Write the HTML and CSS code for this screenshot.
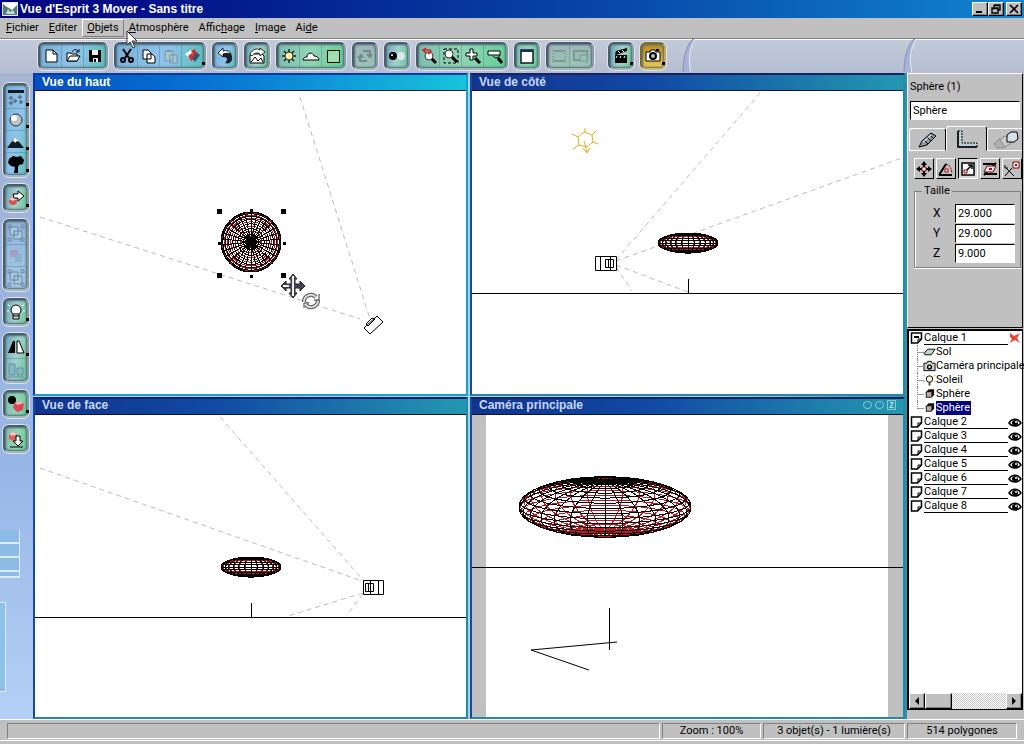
FILE: index.html
```html
<!DOCTYPE html>
<html lang="fr">
<head>
    <meta charset="UTF-8">
    <meta name="viewport" content="width=device-width, initial-scale=1.0">
    <title>Vue d'Esprit 3 Mover - Sans titre</title>
    <link rel="stylesheet" href="styles.css">
</head>
<body>

<!-- icon set, 18x18 grid -->
<svg class="icon-defs" width="0" height="0" aria-hidden="true">
    <symbol id="i-new" viewBox="0 0 18 18"><path d="M4 3h7l4 4v8H4z" fill="#fff" stroke="#000"/><path d="M11 3v4h4" fill="none" stroke="#000"/></symbol>
    <symbol id="i-open" viewBox="0 0 18 18"><path d="M3 14V6h4l1 1h5v7z" fill="#fff" stroke="#000"/><path d="M3 14l3-5h10l-3 5z" fill="#fff" stroke="#000"/><path d="M8 5c2-3 4-3 6-1M15 2v3h-3" fill="none" stroke="#000"/></symbol>
    <symbol id="i-save" viewBox="0 0 18 18"><path d="M3 3h12v12H4l-1-1z" fill="#000"/><path d="M6 3h6v5H6zM7 11h5v4H7z" fill="#eee"/><path d="M8 12h2v3H8z" fill="#000"/></symbol>
    <symbol id="i-cut" viewBox="0 0 18 18"><path d="M5 2l6 9M13 2l-6 9" stroke="#000" stroke-width="2"/><circle cx="5" cy="13" r="2" fill="none" stroke="#000" stroke-width="2"/><circle cx="13" cy="13" r="2" fill="none" stroke="#000" stroke-width="2"/></symbol>
    <symbol id="i-copy" viewBox="0 0 18 18"><path d="M3 3h5l3 3v6H3zM7 7h5l3 3v6H7z" fill="#fff" stroke="#000"/></symbol>
    <symbol id="i-paste" viewBox="0 0 18 18"><path d="M3 4h8v10H3zM8 8h7v8H8z" fill="#a6c8d0" stroke="#7595a8"/><path d="M5 3h4v2H5z" fill="#7595a8"/></symbol>
    <symbol id="i-paint" viewBox="0 0 18 18"><path d="M1 7l6-4 3 4-5 4z" fill="#fff"/><path d="M4 9l4-3 3 5-4 3z" fill="#d83030"/><path d="M7 4l4-2 2 5-3 2z" fill="#d83030"/><path d="M12 5l4 3-5 7-3-4z" fill="#405068"/></symbol>
    <symbol id="i-undo" viewBox="0 0 18 18"><path d="M7 5c6-2 10 1 9 8-1 3-4 4-7 3 3-3 3-6-2-6z" fill="#182028"/><path d="M2 6l5-5v3c4-1 7 0 8 3-3-1-5-1-8 0v3z" fill="#fff" stroke="#000" stroke-width=".8"/></symbol>
    <symbol id="i-edit" viewBox="0 0 18 18"><path d="M2 16V8l3-1h9l2 2v7z" fill="#fff" stroke="#000"/><path d="M3 15l4-5 3 4 3-3 2 4" fill="none" stroke="#000"/><path d="M2 7c3-5 7-6 10-4V1l5 4-5 4V7C9 5 6 6 4 9z" fill="#fff" stroke="#000" stroke-width=".8"/></symbol>
    <symbol id="i-sun" viewBox="0 0 18 18"><path d="M9 2v14M2 9h14M4 4l10 10M14 4L4 14" stroke="#222" stroke-width="1.5"/><circle cx="9" cy="9" r="4" fill="#fff3a0" stroke="#333"/></symbol>
    <symbol id="i-cloud" viewBox="0 0 18 18"><path d="M1 13c0-2 2-3 4-3 0-5 6-5 7-1 3 0 5 2 5 4z" fill="#fff" stroke="#000"/></symbol>
    <symbol id="i-box" viewBox="0 0 18 18"><path d="M3.500 3.500h12v12h-12z" fill="#a2dbac" stroke="#000"/></symbol>
    <symbol id="i-swap" viewBox="0 0 18 18"><path d="M7 4h7v5M11 7l3 3 2-3M11 14H4V9M2 11l3-3 2 3" fill="none" stroke="#718a90" stroke-width="2"/></symbol>
    <symbol id="i-balls" viewBox="0 0 18 18"><circle cx="5" cy="9" r="4" fill="#000"/><circle cx="13" cy="9" r="4" fill="#dfe8e8"/><circle cx="4" cy="8" r="1" fill="#fff"/></symbol>
    <symbol id="i-zoomr" viewBox="0 0 18 18"><circle cx="9" cy="9" r="4" fill="#fff" stroke="#333"/><path d="M12 12l4 4" stroke="#000" stroke-width="3"/><path d="M3 3h6c3 0 2 3-1 4M6 1L3 3l3 3" stroke="#d82020" stroke-width="1.500" fill="none"/></symbol>
    <symbol id="i-zooma" viewBox="0 0 18 18"><path d="M2 2h14v14H2z" fill="none" stroke="#000" stroke-dasharray="3 2"/><circle cx="7" cy="7" r="4" fill="#fff" stroke="#333"/><path d="M10 10l5 5" stroke="#000" stroke-width="3"/></symbol>
    <symbol id="i-zoomin" viewBox="0 0 18 18"><path d="M6 2h3v4h4v3H9v4H6V9H2V6h4z" fill="#fff" stroke="#000"/><path d="M11 11l5 5" stroke="#000" stroke-width="3"/></symbol>
    <symbol id="i-zoomout" viewBox="0 0 18 18"><path d="M2 4h12v4H2z" fill="#fff" stroke="#000"/><path d="M7 9c2 3 6 2 7-1" fill="none" stroke="#000"/><path d="M12 11l4 5" stroke="#000" stroke-width="3"/></symbol>
    <symbol id="i-win" viewBox="0 0 18 18"><path d="M3 3h12v13H3z" fill="#fff" stroke="#101828" stroke-width="1.500"/><path d="M3 3h12v2H3z" fill="#202c68"/></symbol>
    <symbol id="i-render" viewBox="0 0 18 18"><path d="M3 4h12v10H3z" fill="none" stroke="#769b90" stroke-width="2"/><path d="M3 4v10M15 4v10" stroke="#9fbab0" stroke-width="2" stroke-dasharray="2 1"/></symbol>
    <symbol id="i-render2" viewBox="0 0 18 18"><path d="M2 4h13v9H2z" fill="none" stroke="#769b90" stroke-width="2"/><path d="M8 8h7v8l-2-2H8z" fill="#a2bdb5" stroke="#769b90"/></symbol>
    <symbol id="i-clap" viewBox="0 0 18 18"><path d="M3 8h12v8H3zM3 7l1-3 11-3v3L4 8z" fill="#000"/><path d="M6 4l2 2M10 3l2 2M5 9l-1 2M9 9l-1 2M13 9l-1 2" stroke="#fff"/></symbol>
    <symbol id="i-cam" viewBox="0 0 18 18"><path d="M2 5h4l1-2h4l1 2h4v9H2z" fill="#fff" stroke="#000"/><circle cx="9" cy="9" r="3" fill="#bbb" stroke="#000" stroke-width="2"/><path d="M12 2h3v2h-3z" fill="#000"/></symbol>
    <symbol id="i-plane" viewBox="0 0 18 18"><path d="M1 2h16v3H1z" fill="#101820"/><path d="M3 9h2v2H3zM7 12h2v2H7zM12 8h2v2h-2zM3 14h2v2H3zM13 13h2v2h-2z" fill="#fff" stroke="#223" stroke-width=".8"/></symbol>
    <symbol id="i-sphere" viewBox="0 0 18 18"><circle cx="9" cy="9" r="6" fill="#bcc3c8" stroke="#283038"/><circle cx="7" cy="7" r="3" fill="#fff"/></symbol>
    <symbol id="i-mount" viewBox="0 0 18 18"><path d="M0 15l8-11 9 11z" fill="#101820"/><path d="M5 9l3-5 4 5-2-1-2 2-1-2z" fill="#fff"/></symbol>
    <symbol id="i-tree" viewBox="0 0 18 18"><path d="M7 18l1-6-4-1-3-3 1-4 4-3 4 1 4-1 3 4-1 4-4 1-1 2v6z" fill="#000"/></symbol>
    <symbol id="i-load" viewBox="0 0 18 18"><circle cx="6" cy="12" r="4" fill="#e05050"/><path d="M2 10l4-2 4 2-4 2z" fill="#f3d4d4"/><path d="M6 5h5V2l6 5-6 5V9H7z" fill="#fff" stroke="#000"/></symbol>
    <symbol id="i-group" viewBox="0 0 18 18"><path d="M3 3h8v8H3zM7 7h8v8H7z" fill="#a9c6de" stroke="#6a88a8"/><path d="M1 1h3v3H1zM14 1h3v3h-3zM1 14h3v3H1zM14 14h3v3h-3z" fill="none" stroke="#6a88a8"/></symbol>
    <symbol id="i-bool" viewBox="0 0 18 18"><path d="M3 3h8v7H3z" fill="#a99cc4"/><path d="M8 7h7v8H8z" fill="#8fafce"/></symbol>
    <symbol id="i-bulb" viewBox="0 0 18 18"><circle cx="9" cy="7" r="5" fill="#fff" stroke="#000"/><path d="M6 11h6v5H6z" fill="#ddd" stroke="#000"/><path d="M6 13h6" stroke="#000"/><path d="M1 2l2 1M17 2l-2 1M0 8h2M16 8h2" stroke="#fff"/></symbol>
    <symbol id="i-flip" viewBox="0 0 18 18"><path d="M1 15L6 3h2v12z" fill="#000"/><path d="M10 15V3h2l5 12z" fill="#fff" stroke="#000"/></symbol>
    <symbol id="i-align" viewBox="0 0 18 18"><path d="M2 3h6v11H2zM10 7h6v7h-6z" fill="#86b8c4" stroke="#5f8fa0"/><path d="M1 16h16" stroke="#5f8fa0"/></symbol>
    <symbol id="i-pos" viewBox="0 0 18 18"><path d="M7 8l6-2 4 2-1 7-6 2-4-4z" fill="#dc4854"/><path d="M7 8l6-2 4 2-6 2z" fill="#ffb6b6"/><circle cx="5" cy="5" r="4" fill="#000"/></symbol>
    <symbol id="i-drop" viewBox="0 0 18 18"><path d="M2 4l4-2 4 2v5l-4 2-4-2z" fill="#e06060"/><path d="M2 4l4-2 4 2-4 2z" fill="#f8cccc"/><path d="M9 6h4v5h3l-5 5-5-5h3z" fill="#fff" stroke="#000"/><path d="M3 17h13" stroke="#000"/></symbol>
    <symbol id="i-move" viewBox="0 0 18 18"><path d="M9 1l3 4H6zM9 17l3-4H6zM1 9l4-3v6zM17 9l-4-3v6z" fill="#000"/><path d="M9 4v10M4 9h10" stroke="#000" stroke-width="2"/><path d="M7 7h4v4H7z" fill="#fff" stroke="#800"/></symbol>
    <symbol id="i-rot" viewBox="0 0 18 18"><path d="M2 15L9 4M2 15h13" stroke="#000" stroke-width="2"/><path d="M9 4c4 1 5 4 6 9" fill="none" stroke="#800" stroke-dasharray="2 1"/><path d="M8 9h3v3H8z" fill="#fff" stroke="#a00"/></symbol>
    <symbol id="i-size" viewBox="0 0 18 18"><path d="M3 3h12v12H3z" fill="#fff" stroke="#000" stroke-width="1.500"/><path d="M5 10h3v3H5z" fill="#fff" stroke="#a00"/><path d="M8 10l5-5M9 5h4v4" fill="none" stroke="#000" stroke-width="1.500"/></symbol>
    <symbol id="i-twist" viewBox="0 0 18 18"><path d="M2 4h12M4 14h12M15 3l-3 3M3 15l3-3" stroke="#000" stroke-width="2"/><path d="M3 12l3-6h9l-3 6z" fill="#eee" stroke="#700"/><path d="M8 8h3v2H8z" fill="#c00"/></symbol>
    <symbol id="i-axis" viewBox="0 0 18 18"><path d="M10 2h6v6h-6z" fill="#fff" stroke="#800"/><path d="M3 8l8 8M9 8l-7 8M2 5v3h3" fill="none" stroke="#000"/><path d="M12 4h2v2h-2z" fill="#a00"/></symbol>
    <symbol id="i-page" viewBox="0 0 14 14"><path d="M1.500 2h10v6l-4 4h-6z" fill="#fff" stroke="#000" stroke-width="1.500"/><path d="M11 8H8v4" fill="none" stroke="#000"/></symbol>
    <symbol id="i-pageopen" viewBox="0 0 14 14"><path d="M1.500 2h10v6l-4 4h-6z" fill="#fff" stroke="#000" stroke-width="1.500"/><path d="M4 6h5" stroke="#000" stroke-width="2"/><path d="M11 8H8v4" fill="none" stroke="#000"/></symbol>
    <symbol id="i-eye" viewBox="0 0 14 14"><path d="M1 8c3-5 9-5 12 0-3 4-9 4-12 0z" fill="#fff" stroke="#000" stroke-width="1.5"/><circle cx="7" cy="8" r="3" fill="#000"/><circle cx="8" cy="7" r="1" fill="#fff"/></symbol>
    <symbol id="i-x" viewBox="0 0 14 14"><path d="M2 2l4 3 6-3-3 5 3 5-5-3-6 3 3-4-2-2z" fill="#ee4438"/></symbol>
    <symbol id="i-ground" viewBox="0 0 14 14"><path d="M1 9l4-5h8l-4 6H2z" fill="#b8d8d4" stroke="#000"/></symbol>
    <symbol id="i-smallcam" viewBox="0 0 14 14"><path d="M1 4h3l1-2h4l1 2h3v8H1z" fill="#ccc" stroke="#000"/><circle cx="7" cy="8" r="2" fill="#fff" stroke="#000" stroke-width="1.5"/></symbol>
    <symbol id="i-smallbulb" viewBox="0 0 14 14"><circle cx="7" cy="6" r="3.5" fill="#fff6d0" stroke="#000"/><path d="M6 9h2v4H6z" fill="#444"/><path d="M1 2l1 1M13 2l-1 1M1 9l1-1M13 9l-1-1" stroke="#777"/></symbol>
    <symbol id="i-cube" viewBox="0 0 14 14"><path d="M3 5l3-3h6v6l-3 3H3z" fill="#181010"/><path d="M4 5h5v5H4z" fill="#b8aca0"/></symbol>
    <symbol id="i-arrowl" viewBox="0 0 8 8"><path d="M6 0v8L2 4z"/></symbol>
    <symbol id="i-arrowr" viewBox="0 0 8 8"><path d="M2 0v8l4-4z"/></symbol>
</svg>

<div class="app">
    <header class="titlebar">
        <svg class="logo" viewBox="0 0 16 14"><path d="M0 0h16v14H0z" fill="#dfe9ec"/><path d="M1 1h14v5L9 9 1 3z" fill="#fff"/><path d="M1 2l4 3 2 1 3 2 5-5v10H1z" fill="#50807c"/><path d="M6 7l2 3 3-2 2 4H4z" fill="#c4dcd8"/></svg>
        <h1>Vue d'Esprit 3 Mover - Sans titre</h1>
        <div class="win-buttons">
            <button aria-label="Réduire"><svg viewBox="0 0 12 10"><path d="M2 8h6" stroke="#000" stroke-width="2"/></svg></button>
            <button aria-label="Restaurer"><svg viewBox="0 0 12 10"><path d="M4 1h6v5H8M4 1v2M4 1.5h6" fill="none" stroke="#000" stroke-width="1.4"/><path d="M2 4h6v5H2zM2 4.5h6" fill="none" stroke="#000" stroke-width="1.4"/></svg></button>
            <button class="close" aria-label="Fermer"><svg viewBox="0 0 12 10"><path d="M2 1l8 8M10 1L2 9" stroke="#000" stroke-width="1.7"/></svg></button>
        </div>
    </header>

    <nav class="menubar">
        <button><u>F</u>ichier</button>
        <button><u>E</u>diter</button>
        <button class="hover"><u>O</u>bjets</button>
        <button><u>A</u>tmosphère</button>
        <button>Affic<u>h</u>age</button>
        <button><u>I</u>mage</button>
        <button>Ai<u>d</u>e</button>
        <svg class="pointer" viewBox="0 0 12 19"><path d="M1 1v14l3-3 3 6 2-1-3-6h5z" fill="#fff" stroke="#333"/></svg>
    </nav>

    <div class="toolbar">
        <div class="group blue">
            <button aria-label="Nouveau"><svg><use href="#i-new"/></svg></button>
            <button aria-label="Ouvrir"><svg><use href="#i-open"/></svg></button>
            <button aria-label="Enregistrer"><svg><use href="#i-save"/></svg></button>
        </div>
        <div class="group blue">
            <button aria-label="Couper"><svg><use href="#i-cut"/></svg></button>
            <button aria-label="Copier"><svg><use href="#i-copy"/></svg></button>
            <button aria-label="Coller"><svg><use href="#i-paste"/></svg></button>
            <button class="more" aria-label="Peindre"><svg><use href="#i-paint"/></svg></button>
        </div>
        <div class="group blue"><button aria-label="Annuler"><svg><use href="#i-undo"/></svg></button></div>
        <div class="group"><button aria-label="Modifier"><svg><use href="#i-edit"/></svg></button></div>
        <div class="group green">
            <button aria-label="Atmosphère"><svg><use href="#i-sun"/></svg></button>
            <button aria-label="Nuages"><svg><use href="#i-cloud"/></svg></button>
            <button aria-label="Fond"><svg><use href="#i-box"/></svg></button>
        </div>
        <div class="group off"><button aria-label="Échanger"><svg><use href="#i-swap"/></svg></button></div>
        <div class="group"><button aria-label="Aperçu"><svg><use href="#i-balls"/></svg></button></div>
        <div class="group green">
            <button aria-label="Annuler le zoom"><svg><use href="#i-zoomr"/></svg></button>
            <button aria-label="Zoom sur zone"><svg><use href="#i-zooma"/></svg></button>
            <button aria-label="Zoom avant"><svg><use href="#i-zoomin"/></svg></button>
            <button aria-label="Zoom arrière"><svg><use href="#i-zoomout"/></svg></button>
        </div>
        <div class="group green"><button aria-label="Vues"><svg><use href="#i-win"/></svg></button></div>
        <div class="group off">
            <button aria-label="Rendu"><svg><use href="#i-render"/></svg></button>
            <button aria-label="Rendu de zone"><svg><use href="#i-render2"/></svg></button>
        </div>
        <div class="group apart"><button class="more" aria-label="Animation"><svg><use href="#i-clap"/></svg></button></div>
        <div class="group gold"><button class="more" aria-label="Calculer l'image"><svg><use href="#i-cam"/></svg></button></div>
        <svg class="swoosh"><path d="M2 34C2 20 5 6 12 0h2C8 10 7 22 10 34z" fill="#a7b3d8"/><path d="M2 34C2 20 5 6 12 0" fill="none" stroke="#8390ae"/><path d="M14 0C8 10 7 22 10 34" fill="none" stroke="#e6ebf6"/></svg>
        <svg class="swoosh end"><path d="M2 34C2 20 5 6 12 0h2C8 10 7 22 10 34z" fill="#a7b3d8"/><path d="M2 34C2 20 5 6 12 0" fill="none" stroke="#8390ae"/><path d="M14 0C8 10 7 22 10 34" fill="none" stroke="#e6ebf6"/></svg>
    </div>

    <div class="main">
        <aside class="side">
            <div class="group blue">
                <button class="more" aria-label="Plan"><svg><use href="#i-plane"/></svg></button>
                <button class="more" aria-label="Sphère"><svg><use href="#i-sphere"/></svg></button>
                <button class="more" aria-label="Terrain"><svg><use href="#i-mount"/></svg></button>
                <button class="more" aria-label="Plante"><svg><use href="#i-tree"/></svg></button>
            </div>
            <div class="group"><button class="more" aria-label="Charger un objet"><svg><use href="#i-load"/></svg></button></div>
            <div class="group dim">
                <button aria-label="Grouper"><svg><use href="#i-group"/></svg></button>
                <button aria-label="Booléen"><svg><use href="#i-bool"/></svg></button>
                <button aria-label="Dégrouper"><svg><use href="#i-group"/></svg></button>
            </div>
            <div class="group"><button class="more" aria-label="Lumière"><svg><use href="#i-bulb"/></svg></button></div>
            <div class="group">
                <button class="more" aria-label="Symétrie"><svg><use href="#i-flip"/></svg></button>
                <button aria-label="Aligner"><svg><use href="#i-align"/></svg></button>
            </div>
            <div class="group green"><button class="more" aria-label="Dispersion"><svg><use href="#i-pos"/></svg></button></div>
            <div class="group green"><button aria-label="Poser"><svg><use href="#i-drop"/></svg></button></div>
            <div class="decor"><div class="slats"></div><div class="pane"></div></div>
        </aside>

        <main class="views">
            <section class="view active">
                <h2>Vue du haut</h2>
                <svg class="canvas">
                    <g class="frustum"><path d="M265 6L335 228"/><path d="M5 126L325 228"/></g>
                    <g class="wire" data-x="216" data-y="151" data-r="30" data-h="10" data-tilt="90" data-step="11"></g>
                    <path d="M182 118h5v5h-5zM246 118h5v5h-5zM182 182h5v5h-5zM246 182h5v5h-5zM215 118h3v3h-3zM183 151h3v3h-3zM248 151h3v3h-3zM215 184h3v3h-3z"/>
                    <g class="line"><path d="M329 237l13-12 6 6-13 12zM331 233l6-6 3 1-7 7z"/></g>
                    <path d="M258 183l4 5h-2v5h5v-3l5 5-5 5v-3h-5v5h2l-4 5-4-5h2v-5h-5v3l-5-5 5-5v3h5v-5h-2z" fill="#445" stroke="#222"/>
                    <path d="M258 185v20M248 195h6" stroke="#eee" stroke-width="2"/>
                    <g fill="none"><path d="M269 211a7 7 0 0 1 12-5M283 209a7 7 0 0 1-12 5" stroke="#555" stroke-width="4"/><path d="M269 211a7 7 0 0 1 12-5M283 209a7 7 0 0 1-12 5" stroke="#ddd" stroke-width="2"/><path d="M279 209h5v-6M274 212h-5v5" stroke="#333"/></g>
                </svg>
            </section>

            <section class="view">
                <h2>Vue de côté</h2>
                <svg class="canvas">
                    <g class="frustum"><path d="M144 169L288 2"/><path d="M144 170L430 67"/><path d="M144 176l16 24"/><path d="M144 174l72 27"/></g>
                    <g class="wire" data-x="216" data-y="152" data-r="30" data-h="10" data-tilt="0" data-step="15"></g>
                    <g class="sunmark"><path d="M106 46l6-5 8 3 1 7-6 5-8-2zM113 41v-4M120 44l5-5M121 51l5 2M107 54l-6 4M106 46l-6-3M112 50l3 11M111 57l4 5 3-5"/></g>
                    <g class="line"><path d="M123.500 165.500h21v14h-21zM128.500 165v14M133.500 168.500h8v8h-8zM136.500 168v9M138.500 165v14"/><line x1="0" y1="202.500" x2="100%" y2="202.500"/><path d="M216.500 188v14"/></g>
                </svg>
            </section>

            <section class="view">
                <h2>Vue de face</h2>
                <svg class="canvas">
                    <g class="frustum"><path d="M185 2l143 163"/><path d="M5 53l322 113"/><path d="M328 178l-75 23"/><path d="M328 179l-16 21"/></g>
                    <g class="wire" data-x="216" data-y="152" data-r="30" data-h="10" data-tilt="0" data-step="15"></g>
                    <g class="line"><path d="M328.500 165.500h20v14h-20zM343.500 165v14M330.500 168.500h8v8h-8zM333.500 168v9M335.500 165v14"/><line x1="0" y1="202.500" x2="100%" y2="202.500"/><path d="M216.500 188v14"/></g>
                </svg>
            </section>

            <section class="view camera">
                <h2>Caméra principale <span class="nav"><i></i><i></i><b>z</b></span></h2>
                <svg class="canvas">
                    <g class="wire" data-x="133" data-y="92" data-r="86" data-h="26" data-tilt="11" data-step="10"></g>
                    <g class="line"><line x1="0" y1="152.500" x2="100%" y2="152.500"/><path d="M137.500 193v42M145 227l-86 8 58 20"/></g>
                </svg>
            </section>
        </main>

        <aside class="panel">
            <form class="props">
                <label class="obj-name" for="name">Sphère (1)</label>
                <input id="name" type="text" value="Sphère">
                <div class="tabs">
                    <button type="button" aria-label="Matière"><svg viewBox="0 0 28 20"><path d="M5 17l3-6 9-8 5 3-9 9z" fill="#8d9aa4" stroke="#000"/><path d="M10 10l4 4M13 7l4 4M16 5l4 4" stroke="#000"/><path d="M9 12l8-7" stroke="#fff"/></svg></button>
                    <button type="button" class="on" aria-label="Dimensions"><svg viewBox="0 0 28 20"><path d="M5 2h4v12h15v4H5z" fill="#b9ccd2" stroke="#000" stroke-dasharray="2 1"/><path d="M5 2v16h19" fill="none" stroke="#000" stroke-width="1.5"/></svg></button>
                    <button type="button" aria-label="Animation"><svg viewBox="0 0 28 20"><path d="M2 14l5-5h6l4 4-5 5H5z" fill="#b0b0b0" stroke="#777" stroke-dasharray="2 1"/><path d="M8 10l5-4 5 2 1 5-6 4z" fill="#ccc" stroke="#888"/><path d="M15 5l4-3h6l1 7-4 3h-7z" fill="#d4e3ea" stroke="#000"/></svg></button>
                </div>
                <div class="modes">
                    <button type="button" aria-label="Position"><svg><use href="#i-move"/></svg></button>
                    <button type="button" aria-label="Orientation"><svg><use href="#i-rot"/></svg></button>
                    <button type="button" class="on" aria-label="Taille"><svg><use href="#i-size"/></svg></button>
                    <button type="button" aria-label="Torsion"><svg><use href="#i-twist"/></svg></button>
                    <button type="button" aria-label="Pivot"><svg><use href="#i-axis"/></svg></button>
                </div>
                <fieldset>
                    <legend>Taille</legend>
                    <label for="x">X</label><input id="x" type="text" value="29.000">
                    <label for="y">Y</label><input id="y" type="text" value="29.000">
                    <label for="z">Z</label><input id="z" type="text" value="9.000">
                </fieldset>
            </form>

            <div class="layers">
                <ul>
                    <li class="layer"><svg><use href="#i-pageopen"/></svg><span>Calque 1</span><svg><use href="#i-x"/></svg></li>
                    <li class="item"><svg><use href="#i-ground"/></svg><span>Sol</span></li>
                    <li class="item"><svg><use href="#i-smallcam"/></svg><span>Caméra principale</span></li>
                    <li class="item"><svg><use href="#i-smallbulb"/></svg><span>Soleil</span></li>
                    <li class="item"><svg><use href="#i-cube"/></svg><span>Sphère</span></li>
                    <li class="item last selected"><svg><use href="#i-cube"/></svg><span>Sphère</span></li>
                    <li class="layer"><svg><use href="#i-page"/></svg><span>Calque 2</span><svg><use href="#i-eye"/></svg></li>
                    <li class="layer"><svg><use href="#i-page"/></svg><span>Calque 3</span><svg><use href="#i-eye"/></svg></li>
                    <li class="layer"><svg><use href="#i-page"/></svg><span>Calque 4</span><svg><use href="#i-eye"/></svg></li>
                    <li class="layer"><svg><use href="#i-page"/></svg><span>Calque 5</span><svg><use href="#i-eye"/></svg></li>
                    <li class="layer"><svg><use href="#i-page"/></svg><span>Calque 6</span><svg><use href="#i-eye"/></svg></li>
                    <li class="layer"><svg><use href="#i-page"/></svg><span>Calque 7</span><svg><use href="#i-eye"/></svg></li>
                    <li class="layer"><svg><use href="#i-page"/></svg><span>Calque 8</span><svg><use href="#i-eye"/></svg></li>
                </ul>
                <div class="scrollbar">
                    <button aria-label="Gauche"><svg><use href="#i-arrowl"/></svg></button>
                    <div class="thumb"></div>
                    <button class="right" aria-label="Droite"><svg><use href="#i-arrowr"/></svg></button>
                </div>
            </div>
        </aside>
    </div>

    <footer class="status">
        <div class="cell grow"></div>
        <div class="cell zoom">Zoom : 100%</div>
        <div class="cell count">3 objet(s) - 1 lumière(s)</div>
        <div class="cell poly">514 polygones</div>
    </footer>
</div>

<script src="script.js"></script>
</body>
</html>
```
FILE: styles.css
```css
* {
    box-sizing: border-box;
}

body {
    margin: 0;
    font-family: Roboto, "Liberation Sans", sans-serif;
    font-size: 11px;
    line-height: 14px;
    color: #000;
    background: #c0c0c0;
}

button,
input {
    font: inherit;
    color: inherit;
    border-radius: 0;
}

button {
    padding: 0;
    border: none;
    background: none;
    display: flex;
    align-items: center;
    justify-content: center;
}

.icon-defs {
    position: absolute;
}

.app {
    display: grid;
    grid-template-rows: 18px 21px 34px 1fr 25px;
    height: 100vh;
}

/* title bar */
.titlebar {
    display: flex;
    align-items: center;
    padding: 0 2px;
    background: linear-gradient(to right, #000080, #0848a8 60%, #1084d0);
    color: #fff;
}

.logo {
    width: 16px;
    height: 14px;
    margin-right: 2px;
}

.titlebar h1 {
    flex: 1;
    margin: 0;
    font: bold 12px/16px "Liberation Sans", sans-serif;
}

.win-buttons {
    display: flex;
}

.win-buttons button,
.scrollbar button,
.thumb {
    background: #c0c0c0;
    border: 1px solid;
    border-color: #fff #000 #000 #fff;
    box-shadow: inset -1px -1px #808080;
}

.win-buttons button {
    width: 16px;
    height: 14px;
}

.win-buttons svg {
    width: 12px;
    height: 10px;
}

.win-buttons .close {
    margin-left: 2px;
}

/* menu */
.menubar {
    position: relative;
    display: flex;
    align-items: center;
    padding-left: 1px;
    border-bottom: 1px solid #808080;
}

.menubar button {
    height: 18px;
    padding: 0 4px;
    border: 1px solid transparent;
}

.menubar .hover {
    border-color: #fff #808080 #808080 #fff;
}

.menubar u {
    text-underline-offset: 1px;
}

.pointer {
    position: absolute;
    left: 126px;
    top: 12px;
    width: 12px;
    height: 19px;
    z-index: 2;
}

/* tool groups */
.toolbar {
    display: flex;
    align-items: center;
    gap: 6px;
    padding: 0 0 2px 38px;
    background: linear-gradient(#c3cad9, #b5bed1);
    border-top: 1px solid #fff;
}

.group {
    display: flex;
    padding: 1px;
    border: 2px solid;
    border-color: #4d5c68 #8b9aa4 #a6b4bc #4d5c68;
    border-radius: 6px;
    background: linear-gradient(100deg, #6aa6b8, #a3d0cc 50%, #68c896);
    box-shadow: 0 0 0 1px #dde5ec, inset 0 0 2px 1px #4a6a78;
}

.group.blue {
    background: linear-gradient(100deg, #78b0d8, #90c4ec 55%, #58bfb8);
}

.group.green {
    background: linear-gradient(100deg, #7dbcb0, #91d4b4 50%, #62d094);
}

.group.gold {
    border-color: #7d6c30 #bca860 #c8b878 #7d6c30;
    background: linear-gradient(#b48c20, #f0c850);
}

.group.off {
    background: linear-gradient(#a0b4b8, #9bc4b4);
}

.group.dim {
    background: linear-gradient(#8eb4d8, #a6c8e4);
}

.group button {
    position: relative;
    width: 22px;
    height: 22px;
}

.toolbar .group button:first-child {
    width: 20px;
}

.toolbar .group button + button {
    border-left: 1px solid rgba(60, 110, 130, .35);
}

.side .group button + button {
    border-top: 1px solid rgba(60, 110, 130, .35);
}

.group svg,
.modes svg {
    width: 18px;
    height: 18px;
}

.group .more::after {
    content: "";
    position: absolute;
    right: -2px;
    bottom: 2px;
    width: 3px;
    height: 3px;
    background: #000;
}

.apart {
    margin-left: 8px;
}

.swoosh {
    width: 16px;
    height: 33px;
    margin-left: 9px;
}

.swoosh.end {
    margin-left: auto;
    margin-right: 106px;
}

/* work area */
.main {
    display: grid;
    grid-template-columns: 33px 1fr 117px;
    min-height: 0;
}

.side {
    display: flex;
    flex-direction: column;
    align-items: center;
    gap: 7px;
    padding: 10px 2px 0 0;
    background: linear-gradient(#a9b5ce, #9cb4dc 30%, #98b6e6 60%, #b3d0f5);
}

.side .group {
    flex-direction: column;
    padding: 1px 0;
}

.decor {
    align-self: stretch;
    flex: 1;
    display: flex;
    flex-direction: column;
    gap: 24px;
    padding-top: 70px;
    min-height: 0;
}

.slats {
    width: 20px;
    height: 48px;
    border-right: 1px solid #dcecff;
    border-bottom: 2px solid #dcecff;
    background: repeating-linear-gradient(#8cbbe6 0 12px, #dcecff 12px 14px);
}

.pane {
    width: 6px;
    height: 90px;
    border: 1px solid #dcecff;
    border-left: none;
    background: #8fc0ea;
}

.views {
    display: grid;
    grid-template: 1fr 1fr / 1fr 1fr;
    gap: 1px 2px;
    min-width: 0;
    padding-right: 2px;
    background: linear-gradient(to right, #a9d4e4 80%, #3090a8);
}

.view {
    display: flex;
    flex-direction: column;
    min-width: 0;
    min-height: 0;
    border: 2px solid;
    border-color: #1c2060 #2488a8 #2488a8 #1848a0;
    background: #fff;
}

.view.active {
    border-color: #0838a0 #18a0d0 #18a0d0 #0838a0;
}

.view h2 {
    display: flex;
    flex: none;
    align-items: center;
    height: 16px;
    margin: 0;
    padding: 0 7px 2px;
    border-bottom: 1px solid #101030;
    font: bold 12px/14px "Liberation Sans", sans-serif;
    color: #c8d8ff;
    background: linear-gradient(to right, #12348c, #1048a4 40%, #2498b0);
}

.view.active h2 {
    color: #fff;
    background: linear-gradient(to right, #0450c0, #0878d4 45%, #18c4dc);
}

.view .nav {
    display: flex;
    align-items: center;
    gap: 3px;
    margin-left: auto;
    color: #a8e0e8;
}

.nav i {
    width: 9px;
    height: 8px;
    border: 1px solid #88c8d8;
    border-radius: 4px;
}

.nav b {
    width: 9px;
    border: 1px solid #88c8d8;
    font-size: 10px;
    line-height: 8px;
    text-align: center;
}

.canvas {
    flex: 1;
    width: 100%;
    min-height: 0;
}

.camera .canvas {
    background: linear-gradient(to right, #c0c0c0 14px, transparent 14px calc(100% - 15px), #c0c0c0 calc(100% - 15px));
}

.frustum {
    fill: none;
    stroke: #bbb;
    stroke-dasharray: 5 4;
}

.line {
    fill: none;
    stroke: #000;
}

.sunmark {
    fill: none;
    stroke: #dcb020;
}

.wire path {
    fill: none;
    stroke: #000;
    stroke-width: 1;
    shape-rendering: crispEdges;
}

.wire .back {
    stroke: #c01820;
}

/* right panel */
.panel {
    display: flex;
    flex-direction: column;
    min-width: 0;
    overflow: hidden;
    padding: 0 1px 9px 0;
    background: #c0c0c0;
}

.props {
    height: 255px;
    padding: 5px 0 0 2px;
    border: 1px solid;
    border-color: #fff #000 #000 #fff;
    overflow: hidden;
}

.obj-name {
    display: block;
    line-height: 16px;
}

.panel input {
    width: 110px;
    height: 19px;
    margin: 6px 0 0;
    padding: 0 2px;
    border: 1px solid;
    border-color: #000 #fff #fff #000;
    background: #fff;
    outline: none;
}

.tabs {
    display: flex;
    align-items: flex-end;
    margin: 6px 0 0 -1px;
}

.tabs button {
    flex: none;
    width: 37px;
    height: 23px;
    border: 1px solid;
    border-color: #fff #000 #fff #fff;
    border-radius: 3px 3px 0 0;
}

.tabs .on {
    width: 41px;
    height: 25px;
    border-bottom-color: transparent;
}

.tabs svg {
    width: 28px;
    height: 20px;
}

.modes {
    display: flex;
    gap: 2px;
    margin: 7px 0 0 4px;
}

.modes button {
    flex: none;
    width: 20px;
    height: 21px;
    border: 1px solid;
    border-color: #fff #000 #000 #fff;
}

.modes .on {
    border-color: #000 #fff #fff #000;
    background: #d8d8d8;
}

.panel fieldset {
    display: grid;
    grid-template-columns: 34px 60px;
    justify-content: end;
    align-content: start;
    row-gap: 1px;
    height: 84px;
    margin: 5px 1px 0 4px;
    padding: 6px 5px 0 0;
    border: 1px solid #808080;
    box-shadow: inset 1px 0 #fff, 0 1px #fff;
}

.panel legend {
    margin-left: 7px;
    padding: 0 2px;
}

.panel fieldset label {
    padding-left: 12px;
    font-size: 12px;
    line-height: 19px;
}

.panel fieldset input {
    width: 60px;
    margin: 0;
}

.layers {
    display: flex;
    flex: 1;
    flex-direction: column;
    justify-content: space-between;
    min-height: 0;
    margin-top: 1px;
    border: solid #000;
    border-width: 2px 1px 1px 2px;
    background: #fff;
}

.layers ul {
    margin: 0;
    padding: 0 0 0 1px;
    list-style: none;
}

.layers li {
    display: flex;
    align-items: center;
    height: 14px;
    white-space: nowrap;
}

.layers li svg {
    flex: none;
    width: 14px;
    height: 14px;
}

.layer span {
    flex: 1;
    height: 14px;
    border-bottom: 1px solid #000;
}

.item {
    position: relative;
    padding-left: 13px;
}

.item::before {
    content: "";
    position: absolute;
    left: 7px;
    top: 0;
    width: 7px;
    height: 14px;
    border-left: 1px dotted #808080;
    background: linear-gradient(#999, #999) 0 7px / 6px 1px no-repeat;
}

.item.last::before {
    height: 8px;
}

.layers .item svg {
    width: 13px;
}

.item span {
    height: 14px;
    padding: 0 1px 0 0;
}

.item.selected span {
    background: #000080;
    color: #fff;
}

.scrollbar {
    display: flex;
    height: 16px;
    background: repeating-conic-gradient(#fff 0 25%, #c8c8c8 0 50%) 0 0 / 2px 2px;
}

.scrollbar button {
    width: 16px;
}

.scrollbar svg {
    width: 8px;
    height: 8px;
}

.thumb {
    width: 27px;
}

.scrollbar .right {
    margin-left: auto;
}

/* status bar */
.status {
    display: flex;
    gap: 2px;
    padding: 3px 7px 5px;
    border-top: 1px solid #fff;
    box-shadow: inset 0 -3px #c0c0c0, inset 0 -4px #fff;
}

.cell {
    border: 1px solid;
    border-color: #808080 #fff #fff #808080;
    line-height: 14px;
    text-align: center;
}

.cell.grow {
    flex: 1;
}

.cell.zoom {
    width: 99px;
}

.cell.count {
    width: 142px;
}

.cell.poly {
    width: 110px;
}
```
FILE: script.js
```js
// Draws each ellipsoid as a wireframe: rings and meridians, tilted around X.
const NS = "http://www.w3.org/2000/svg";
const RAD = Math.PI / 180;

function wirePaths(cx, cy, r, h, tilt, step, front) {
    const s = Math.sin(tilt), c = Math.cos(tilt);
    let d = "";

    function trace(points) {
        let open = false;
        for (const [lat, lon] of points) {
            const x = Math.cos(lat) * Math.sin(lon);
            const y = Math.cos(lat) * Math.cos(lon);
            const z = Math.sin(lat);
            const facing = (y / r) * c + (z / h) * s >= -0.0001;
            if (facing === front) {
                const px = cx + r * x;
                const py = cy - h * z * c + r * y * s;
                d += (open ? "L" : "M") + px.toFixed(1) + " " + py.toFixed(1);
                open = true;
            } else {
                open = false;
            }
        }
    }

    for (let lat = -90 + step; lat < 90; lat += step) {
        const ring = [];
        for (let lon = 0; lon <= 360; lon += 5) ring.push([lat * RAD, lon * RAD]);
        trace(ring);
    }
    for (let lon = 0; lon < 360; lon += 12) {
        const arc = [];
        for (let lat = -90; lat <= 90; lat += 5) arc.push([lat * RAD, lon * RAD]);
        trace(arc);
    }
    return d;
}

function addPath(group, d, cls) {
    const path = document.createElementNS(NS, "path");
    path.setAttribute("d", d);
    path.setAttribute("class", cls);
    group.appendChild(path);
}

document.querySelectorAll(".wire").forEach(group => {
    const { x, y, r, h, tilt, step } = group.dataset;
    const cx = +x, cy = +y, a = tilt * RAD;
    addPath(group, wirePaths(cx, cy, r - 1, h - 1, a, +step, false), "back");
    addPath(group, wirePaths(cx, cy, +r, +h, a, +step, true), "front");
    // outline
    const ry = Math.hypot(h * Math.cos(a), r * Math.sin(a));
    addPath(group, `M${cx - r} ${cy}a${r} ${ry} 0 1 0 ${2 * r} 0a${r} ${ry} 0 1 0 ${-2 * r} 0`, "front");
});
```
